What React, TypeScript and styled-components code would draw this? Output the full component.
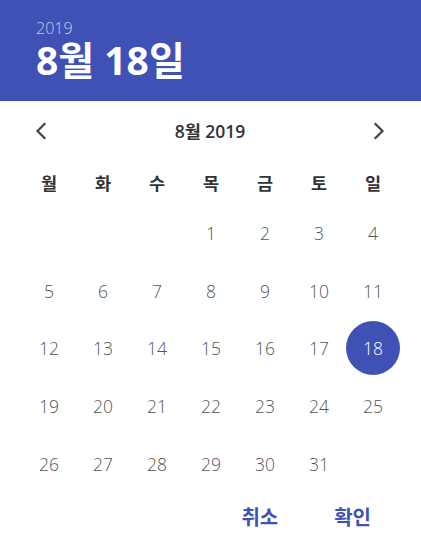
import React from "react";
import styled, { createGlobalStyle } from "styled-components";

const Global = createGlobalStyle`
  html, body { margin: 0; padding: 0; background: #fff; }
  body { font-family: "Open Sans", "Noto Sans CJK KR", sans-serif; }
`;

const Picker = styled.div`
  width: 421px;
  height: 551px;
  display: flex;
  flex-direction: column;
  background: #fff;
`;

const Header = styled.div`
  height: 101px;
  box-sizing: border-box;
  background: #3f51b5;
  padding: 20px 36px 0;
  display: flex;
  flex-direction: column;
  gap: 3px;
`;

const Year = styled.div`
  font-family: "Open Sans", "Noto Sans CJK KR", sans-serif;
  font-weight: 300;
  font-size: 16px;
  line-height: 16px;
  color: rgba(255, 255, 255, 0.72);
`;

const BigDate = styled.div`
  font-family: "Open Sans", "Noto Sans CJK KR", sans-serif;
  font-weight: 700;
  font-size: 39px;
  line-height: 42px;
  color: #fff;
`;

const Body = styled.div`
  padding: 0 23px 0 22px;
  display: flex;
  flex-direction: column;
`;

const Nav = styled.div`
  height: 59px;
  display: flex;
  align-items: center;
  justify-content: space-between;
`;

const ArrowBtn = styled.button`
  width: 40px;
  height: 40px;
  border: none;
  background: none;
  padding: 0;
  display: flex;
  align-items: center;
  justify-content: center;
  color: #444;
  margin: 0 -1px;
`;

const MonthTitle = styled.div`
  font-family: "Open Sans", "Noto Sans CJK KR", sans-serif;
  font-weight: 600;
  font-size: 17.5px;
  color: #333;
`;

const Grid = styled.div`
  display: grid;
  grid-template-columns: repeat(7, 1fr);
`;

const Weekday = styled.div`
  height: 44px;
  display: flex;
  align-items: center;
  justify-content: center;
  font-family: "Noto Sans CJK KR", sans-serif;
  font-weight: 700;
  font-size: 17.5px;
  color: #333;
`;

const Cell = styled.div`
  height: 57.8px;
  display: flex;
  align-items: center;
  justify-content: center;
`;

const Day = styled.div<{ $selected?: boolean }>`
  width: 54px;
  height: 54px;
  border-radius: 50%;
  display: flex;
  align-items: center;
  justify-content: center;
  font-family: "Open Sans", sans-serif;
  font-weight: 300;
  font-size: 17.5px;
  color: ${(p) => (p.$selected ? "#fff" : "#555")};
  background: ${(p) => (p.$selected ? "#3f51b5" : "transparent")};
`;

const Actions = styled.div`
  height: 48px;
  display: flex;
  justify-content: flex-end;
  align-items: center;
  gap: 20px;
  padding-right: 32px;
`;

const ActionBtn = styled.button`
  border: none;
  background: none;
  padding: 0 18px;
  height: 40px;
  font-family: "Noto Sans CJK KR", sans-serif;
  font-weight: 700;
  font-size: 20px;
  color: #3f51b5;
`;

const Chevron = ({ dir }: { dir: "left" | "right" }) => (
  <svg width="24" height="24" viewBox="0 0 24 24" fill="none">
    <path
      d={dir === "left" ? "M15.5 5 8.5 12l7 7" : "M8.5 5l7 7-7 7"}
      stroke="currentColor"
      strokeWidth="2.2"
      strokeLinecap="square"
    />
  </svg>
);

const weekdays = ["월", "화", "수", "목", "금", "토", "일"];
const cells: (number | null)[] = [null, null, null];
for (let d = 1; d <= 31; d++) cells.push(d);

export default function App() {
  return (
    <>
      <Global />
      <Picker>
        <Header>
          <Year>2019</Year>
          <BigDate>8월 18일</BigDate>
        </Header>
        <Body>
          <Nav>
            <ArrowBtn><Chevron dir="left" /></ArrowBtn>
            <MonthTitle>8월 2019</MonthTitle>
            <ArrowBtn><Chevron dir="right" /></ArrowBtn>
          </Nav>
          <Grid>
            {weekdays.map((w) => (
              <Weekday key={w}>{w}</Weekday>
            ))}
            {cells.map((d, i) => (
              <Cell key={i}>{d && <Day $selected={d === 18}>{d}</Day>}</Cell>
            ))}
          </Grid>
        </Body>
        <Actions>
          <ActionBtn>취소</ActionBtn>
          <ActionBtn>확인</ActionBtn>
        </Actions>
      </Picker>
    </>
  );
}
